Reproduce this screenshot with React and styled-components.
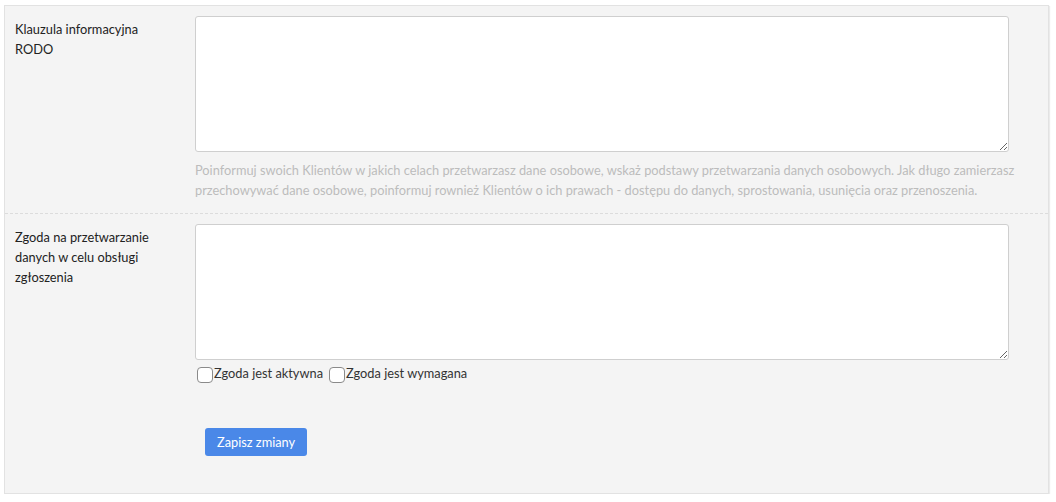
import React from "react";
import styled, { createGlobalStyle } from "styled-components";

const Global = createGlobalStyle`
  html, body { margin: 0; padding: 0; background: #fff; }
  body { font-family: Lato, "Open Sans", sans-serif; font-size: 12.8px; color: #222; }
  * { box-sizing: border-box; }
`;

const Panel = styled.form`
  margin: 5px 0 0 4px;
  width: 1045px;
  height: 489px;
  background: #f4f4f4;
  border: 1px solid #e2e2e2;
  box-shadow: 1px 1px 1px rgba(0, 0, 0, 0.08);
  display: flex;
  flex-direction: column;
`;

const Row = styled.div`
  display: grid;
  grid-template-columns: 180px 1fr;
  padding: 10px 10px ${(p) => p.$pb || 0}px 10px;
  border-bottom: ${(p) => (p.$divider ? "1px dashed #dcdcdc" : "none")};
`;

const Label = styled.label`
  display: block;
  padding-top: 3px;
  padding-right: 20px;
  line-height: 20px;
  font-size: 12.8px;
  color: #222;
`;

const Field = styled.div`
  display: flex;
  flex-direction: column;
`;

const TextArea = styled.textarea`
  display: block;
  width: 814px;
  height: 136px;
  border: 1px solid #cfcfcf;
  border-radius: 3px;
  background: #fff;
  padding: 6px 10px;
  font-family: inherit;
  font-size: 13px;
  resize: vertical;
  outline: none;
`;

const Help = styled.p`
  margin: 8px 0 0;
  line-height: 20px;
  font-size: 12.8px;
  color: #bcbcbc;
`;

const Checks = styled.div`
  display: flex;
  align-items: center;
  margin-top: 4px;
  height: 18px;
`;

const CheckLabel = styled.label`
  display: inline-flex;
  align-items: center;
  margin-right: 4px;
  font-size: 12.8px;
  color: #333;
  line-height: 18px;
`;

const Box = styled.span`
  display: inline-block;
  width: 16px;
  height: 16px;
  margin: 4px 1px 0 2px;
  border: 1px solid #8a8a8a;
  border-radius: 4px;
  background: #fff;
`;

const Actions = styled.div`
  padding: 46px 0 0 200px;
`;

const Button = styled.button`
  height: 28px;
  padding: 0 12px;
  border: none;
  border-radius: 3px;
  background: #4a88e8;
  color: #fff;
  font-family: inherit;
  font-size: 12.8px;
  cursor: pointer;
`;

export default function App() {
  return (
    <>
      <Global />
      <Panel>
        <Row $divider $pb={13}>
          <Label>Klauzula informacyjna RODO</Label>
          <Field>
            <TextArea />
            <Help>
              Poinformuj swoich Klientów w jakich celach przetwarzasz dane osobowe, wskaż podstawy przetwarzania danych
              osobowych. Jak długo zamierzasz przechowywać dane osobowe, poinformuj rownież Klientów o ich prawach -
              dostępu do danych, sprostowania, usunięcia oraz przenoszenia.
            </Help>
          </Field>
        </Row>
        <Row>
          <Label>Zgoda na przetwarzanie danych w celu obsługi zgłoszenia</Label>
          <Field>
            <TextArea />
            <Checks>
              <CheckLabel>
                <Box />
                Zgoda jest aktywna
              </CheckLabel>
              <CheckLabel>
                <Box />
                Zgoda jest wymagana
              </CheckLabel>
            </Checks>
          </Field>
        </Row>
        <Actions>
          <Button type="button">Zapisz zmiany</Button>
        </Actions>
      </Panel>
    </>
  );
}
